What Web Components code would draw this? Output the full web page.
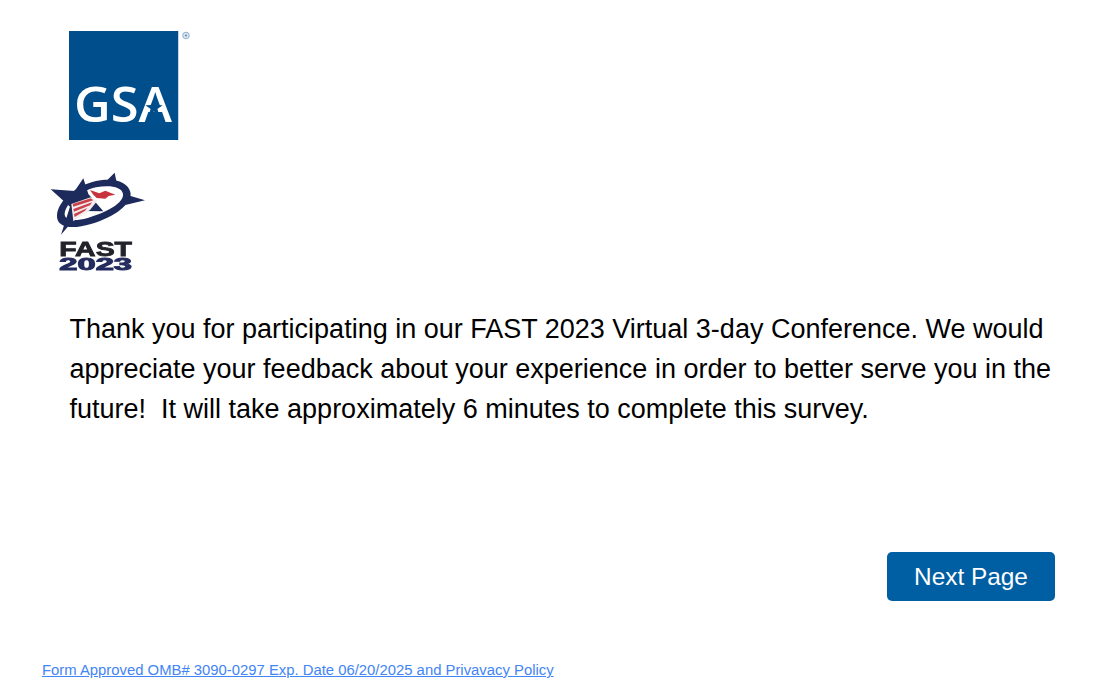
<!DOCTYPE html>
<html lang="en">
<head>
<meta charset="utf-8">
<title>FAST 2023 Survey</title>
<style>
    html, body { margin: 0; background: #fff; }
    body { font-family: "Liberation Sans", Arial, sans-serif; color: #000; }
</style>
</head>
<body>
<survey-page>
    <gsa-logo slot="logos"></gsa-logo>
    <fast-logo slot="logos"></fast-logo>
    <survey-intro>Thank you for participating in our FAST 2023 Virtual 3-day Conference. We would appreciate your feedback about your experience in order to better serve you in the future!&nbsp; It will take approximately 6 minutes to complete this survey.</survey-intro>
    <next-button slot="actions">Next Page</next-button>
    <form-footer slot="footer" href="#">Form Approved OMB# 3090-0297 Exp. Date 06/20/2025 and Privavacy Policy</form-footer>
</survey-page>

<script>
class SurveyPage extends HTMLElement {
    constructor() {
        super();
        this.attachShadow({ mode: 'open' });
        this.shadowRoot.innerHTML = `
            <style>
                :host {
                    display: flex;
                    flex-direction: column;
                    width: 1099px;
                    height: 691px;
                    box-sizing: border-box;
                    overflow: hidden;
                }
                .logos { display: flex; flex-direction: column; }
                .actions { display: flex; justify-content: flex-end; padding: 0 44px 0 0; margin-top: 123px; }
                .footer { margin-top: 60px; padding-left: 42px; }
            </style>
            <div class="logos"><slot name="logos"></slot></div>
            <slot></slot>
            <div class="actions"><slot name="actions"></slot></div>
            <div class="footer"><slot name="footer"></slot></div>
        `;
    }
}

class GsaLogo extends HTMLElement {
    constructor() {
        super();
        this.attachShadow({ mode: 'open' });
        this.shadowRoot.innerHTML = `
            <style>
                :host { display: block; height: 109px; padding: 31px 0 0 69px; }
                svg { display: block; }
                text { font-family: "Open Sans", sans-serif; font-weight: 600; font-size: 49px; fill: #fff; }
            </style>
            <svg width="125" height="109" viewBox="0 0 125 109" role="img" aria-label="GSA">
                <defs><filter id="soft"><feGaussianBlur stdDeviation="0.4"/></filter></defs>
                <rect width="109" height="109" fill="#004e8c"/>
                <rect x="109" width="1" height="109" fill="#c5d7e6"/>
                <g filter="url(#soft)">
                    <text x="5" y="91" textLength="98" lengthAdjust="spacingAndGlyphs">GSA</text>
                    <polygon points="85,68 87.1,74.1 93.6,74.2 88.4,78.1 90.3,84.3 85,80.6 79.7,84.3 81.6,78.1 76.4,74.2 82.9,74.1" fill="#004e8c"/>
                </g>
                <circle cx="117" cy="4.5" r="3.3" fill="#dbe6f0" stroke="#8fb0cf" stroke-width="1"/>
                <circle cx="117" cy="4.5" r="1.1" fill="#5d8db8"/>
            </svg>
        `;
    }
}

class FastLogo extends HTMLElement {
    constructor() {
        super();
        this.attachShadow({ mode: 'open' });
        this.shadowRoot.innerHTML = `
            <style>
                :host { display: block; height: 120px; margin-top: 20px; padding-left: 40px; }
                svg { display: block; }
            </style>
            <svg width="120" height="120" viewBox="0 0 360 360" role="img" aria-label="FAST 2023">
                <defs><filter id="soft2"><feGaussianBlur stdDeviation="1.5"/></filter></defs>
                <g filter="url(#soft2)">
                    <g transform="translate(18 18)">
                        <!-- compass ring, heavier at the upper right and lower left -->
                        <path fill-rule="evenodd" fill="#1f2a5c" d="M253,78 C262,112 204,154 135,174 C75,192 30,184 33,147 C36,105 90,58 150,45 C205,34 245,48 253,78 Z M231,84 C228,62 190,56 150,64 C100,76 62,110 56,142 C54,162 80,168 125,156 C185,138 234,110 231,84 Z"/>
                        <!-- ring spikes -->
                        <polygon points="178,48 206,20 212,50" fill="#1f2a5c"/>
                        <polygon points="246,88 297,103 238,117" fill="#1f2a5c"/>
                        <!-- star -->
                        <polygon points="14,70 86,75 112,37 127,84 172,136 106,135 45,206 72,122" fill="#1f2a5c"/>
                        <!-- wing, white with red stripes -->
                        <polygon points="76,114 134,94 154,104 132,132 82,166" fill="#f4ecec"/>
                        <path d="M80,114 L134,97 L142,103 L82,122 Z" fill="#c8434c"/>
                        <path d="M82,129 L138,109 L132,118 L84,137 Z" fill="#c8434c"/>
                        <path d="M84,144 L124,126 L116,135 L86,153 Z" fill="#c8434c"/>
                        <!-- eagle head -->
                        <path d="M132,72 L160,82 L178,74 L208,86 L188,90 L178,98 L152,96 L142,86 Z" fill="#c8323c"/>
                    </g>
                    <text x="58" y="287" font-family="Liberation Sans" font-weight="700" font-size="62" fill="#23232b" textLength="218" lengthAdjust="spacingAndGlyphs" stroke="#23232b" stroke-width="2.5">FAST</text>
                    <text x="58" y="331" font-family="Liberation Sans" font-weight="700" font-size="52" fill="#252d5e" textLength="218" lengthAdjust="spacingAndGlyphs" stroke="#252d5e" stroke-width="3">2023</text>
                </g>
            </svg>
        `;
    }
}

class SurveyIntro extends HTMLElement {
    constructor() {
        super();
        this.attachShadow({ mode: 'open' });
        this.shadowRoot.innerHTML = `
            <style>
                :host {
                    display: block;
                    margin-top: 29px;
                    padding: 0 44px 0 69.5px;
                    font-size: 27px;
                    line-height: 40px;
                    color: #000;
                }
            </style>
            <slot></slot>
        `;
    }
}

class NextButton extends HTMLElement {
    constructor() {
        super();
        this.attachShadow({ mode: 'open' });
        this.shadowRoot.innerHTML = `
            <style>
                :host { display: inline-block; }
                button {
                    display: block;
                    width: 168px;
                    height: 49px;
                    padding: 0;
                    border: 0;
                    border-radius: 5px;
                    background-color: #005ea2;
                    color: #fff;
                    font-family: "Liberation Sans", Arial, sans-serif;
                    font-size: 24.4px;
                }
            </style>
            <button type="button"><slot></slot></button>
        `;
    }
}

class FormFooter extends HTMLElement {
    constructor() {
        super();
        this.attachShadow({ mode: 'open' });
        this.shadowRoot.innerHTML = `
            <style>
                :host { display: block; font-size: 14.85px; line-height: 18px; }
                a { color: #4285f4; text-decoration: underline; }
            </style>
            <a><slot></slot></a>
        `;
    }

    connectedCallback() {
        this.shadowRoot.querySelector('a').href = this.getAttribute('href') || '#';
    }
}

customElements.define('survey-page', SurveyPage);
customElements.define('gsa-logo', GsaLogo);
customElements.define('fast-logo', FastLogo);
customElements.define('survey-intro', SurveyIntro);
customElements.define('next-button', NextButton);
customElements.define('form-footer', FormFooter);
</script>
</body>
</html>
